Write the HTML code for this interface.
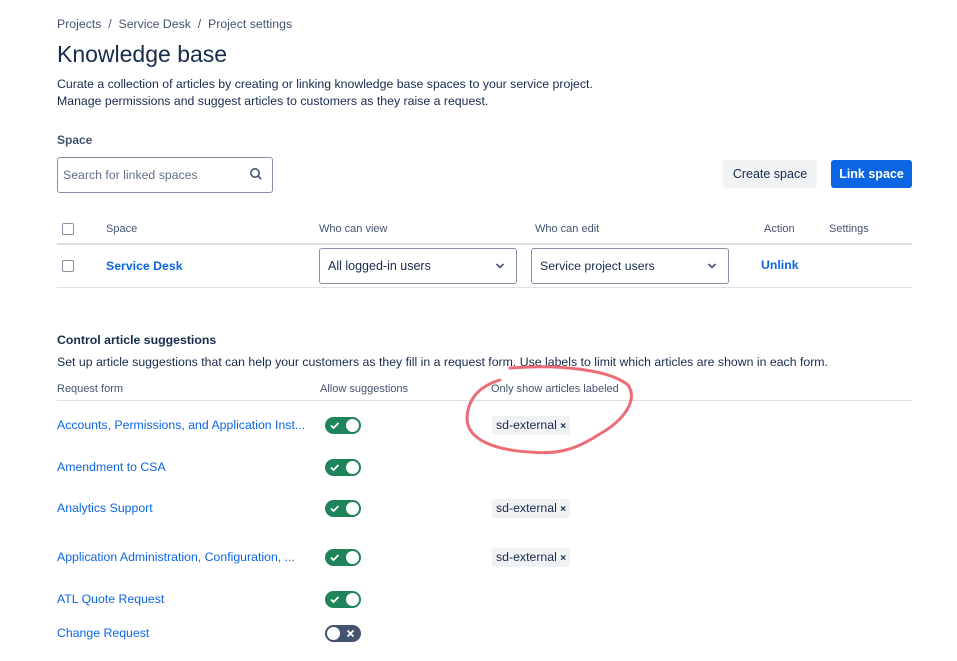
<!DOCTYPE html>
<html><head><meta charset="utf-8"><style>
*{box-sizing:border-box;margin:0;padding:0}
body{width:957px;height:661px;background:#fff;font-family:"Liberation Sans",sans-serif;color:#172b4d;position:relative;overflow:hidden}
.a{position:absolute;white-space:nowrap}
.t{font-size:12.3px}
.s{font-size:11px;color:#44546f}
.lk{color:#0c66e4;font-size:12.3px}
.hr{position:absolute;height:1px;background:#dcdfe4}
.cb{position:absolute;width:12px;height:12px;border:1.5px solid #8590a2;border-radius:2px}
.sel{position:absolute;height:36px;border:1px solid #8590a2;border-radius:3px;font-size:12.5px;padding:10px 8px}
.tg{position:absolute;left:325px;width:36px;height:17px;border-radius:9px;background:#1f845a}
.tg:after{content:"";position:absolute;right:2px;top:2px;width:13px;height:13px;border-radius:50%;background:#fff}
.tg svg{position:absolute;left:5px;top:4px}
.tg.off{background:#44546f}
.tg.off:after{left:2px;right:auto}
.tg.off svg{left:auto;right:6px}
.lb{position:absolute;left:492px;height:19px;background:#f1f2f4;border-radius:3px;font-size:12.3px;padding:2px 4px}
</style></head><body>
<div class="a t" style="left:57px;top:17px;color:#44546f">Projects &nbsp;/&nbsp; Service Desk &nbsp;/&nbsp; Project settings</div>
<div class="a" style="left:57px;top:41px;font-size:23px;color:#172b4d">Knowledge base</div>
<div class="a t" style="left:57px;top:77px">Curate a collection of articles by creating or linking knowledge base spaces to your service project.</div>
<div class="a t" style="left:57px;top:94px">Manage permissions and suggest articles to customers as they raise a request.</div>
<div class="a" style="left:57px;top:133px;font-size:12px;font-weight:bold;color:#44546f">Space</div>
<div class="a" style="left:57px;top:157px;width:216px;height:36px;border:1px solid #8590a2;border-radius:3px"></div>
<div class="a t" style="left:63px;top:168px;color:#626f86">Search for linked spaces</div>
<svg class="a" style="left:249px;top:167px" width="14" height="14" viewBox="0 0 14 14"><circle cx="6" cy="6" r="4.2" fill="none" stroke="#44546f" stroke-width="1.6"/><path d="M9 9l3.2 3.2" stroke="#44546f" stroke-width="1.6"/></svg>
<div class="a" style="left:723px;top:160px;width:94px;height:28px;background:#f1f2f4;border-radius:3px;font-size:12.5px;text-align:center;line-height:28px;color:#172b4d">Create space</div>
<div class="a" style="left:831px;top:160px;width:81px;height:28px;background:#0c66e4;border-radius:3px;font-size:12.5px;font-weight:bold;text-align:center;line-height:28px;color:#fff">Link space</div>
<div class="cb" style="left:62px;top:223px"></div>
<div class="a s" style="left:106px;top:223px">Space</div>
<div class="a s" style="left:319px;top:223px">Who can view</div>
<div class="a s" style="left:535px;top:223px">Who can edit</div>
<div class="a s" style="left:764px;top:223px">Action</div>
<div class="a s" style="left:829px;top:223px">Settings</div>
<div class="hr" style="left:57px;top:243px;width:855px;height:2px"></div>
<div class="cb" style="left:62px;top:260px"></div>
<div class="a lk" style="left:106px;top:259px;font-weight:bold">Service Desk</div>
<div class="sel" style="left:319px;top:248px;width:198px">All logged-in users</div>
<svg class="a" style="left:495px;top:262px" width="10" height="8"><path d="M1.5 2l3.5 3.5 3.5-3.5" fill="none" stroke="#44546f" stroke-width="1.6"/></svg>
<div class="sel" style="left:531px;top:248px;width:198px;font-size:12.3px">Service project users</div>
<svg class="a" style="left:707px;top:262px" width="10" height="8"><path d="M1.5 2l3.5 3.5 3.5-3.5" fill="none" stroke="#44546f" stroke-width="1.6"/></svg>
<div class="a lk" style="left:761px;top:258px;font-weight:bold">Unlink</div>
<div class="hr" style="left:57px;top:287px;width:855px"></div>
<div class="a" style="left:57px;top:333px;font-size:12.3px;font-weight:bold;color:#172b4d">Control article suggestions</div>
<div class="a t" style="left:57px;top:355px">Set up article suggestions that can help your customers as they fill in a request form. Use labels to limit which articles are shown in each form.</div>
<div class="a s" style="left:57px;top:383px">Request form</div>
<div class="a s" style="left:320px;top:383px">Allow suggestions</div>
<div class="a s" style="left:491px;top:383px">Only show articles labeled</div>
<div class="hr" style="left:57px;top:400px;width:855px"></div>
<div class="a lk" style="left:57px;top:418px">Accounts, Permissions, and Application Inst...</div>
<div class="tg" style="top:417px"><svg width="10" height="9"><path d="M1 4.5l2.5 2.5 5-5" fill="none" stroke="#fff" stroke-width="1.8"/></svg></div>
<div class="lb" style="top:416px">sd-external <b style="font-size:10px">×</b></div>
<div class="a lk" style="left:57px;top:460px">Amendment to CSA</div>
<div class="tg" style="top:459px"><svg width="10" height="9"><path d="M1 4.5l2.5 2.5 5-5" fill="none" stroke="#fff" stroke-width="1.8"/></svg></div>
<div class="a lk" style="left:57px;top:501px">Analytics Support</div>
<div class="tg" style="top:500px"><svg width="10" height="9"><path d="M1 4.5l2.5 2.5 5-5" fill="none" stroke="#fff" stroke-width="1.8"/></svg></div>
<div class="lb" style="top:499px">sd-external <b style="font-size:10px">×</b></div>
<div class="a lk" style="left:57px;top:550px">Application Administration, Configuration, ...</div>
<div class="tg" style="top:549px"><svg width="10" height="9"><path d="M1 4.5l2.5 2.5 5-5" fill="none" stroke="#fff" stroke-width="1.8"/></svg></div>
<div class="lb" style="top:548px">sd-external <b style="font-size:10px">×</b></div>
<div class="a lk" style="left:57px;top:592px">ATL Quote Request</div>
<div class="tg" style="top:591px"><svg width="10" height="9"><path d="M1 4.5l2.5 2.5 5-5" fill="none" stroke="#fff" stroke-width="1.8"/></svg></div>
<div class="a lk" style="left:57px;top:626px">Change Request</div>
<div class="tg off" style="top:625px"><svg width="9" height="9"><path d="M1.5 1.5l6 6M7.5 1.5l-6 6" stroke="#fff" stroke-width="1.8"/></svg></div>
<svg class="a" style="left:0;top:0" width="957" height="661"><path d="M510 368 C 560 364, 610 370, 628 385 C 638 400, 625 420, 598 435 C 578 448, 560 455, 530 452 C 495 450, 467 440, 467 418 C 468 398, 480 386, 500 380" fill="none" stroke="#e8555e" stroke-width="3" stroke-linecap="round" opacity="0.85"/></svg>
</body></html>
